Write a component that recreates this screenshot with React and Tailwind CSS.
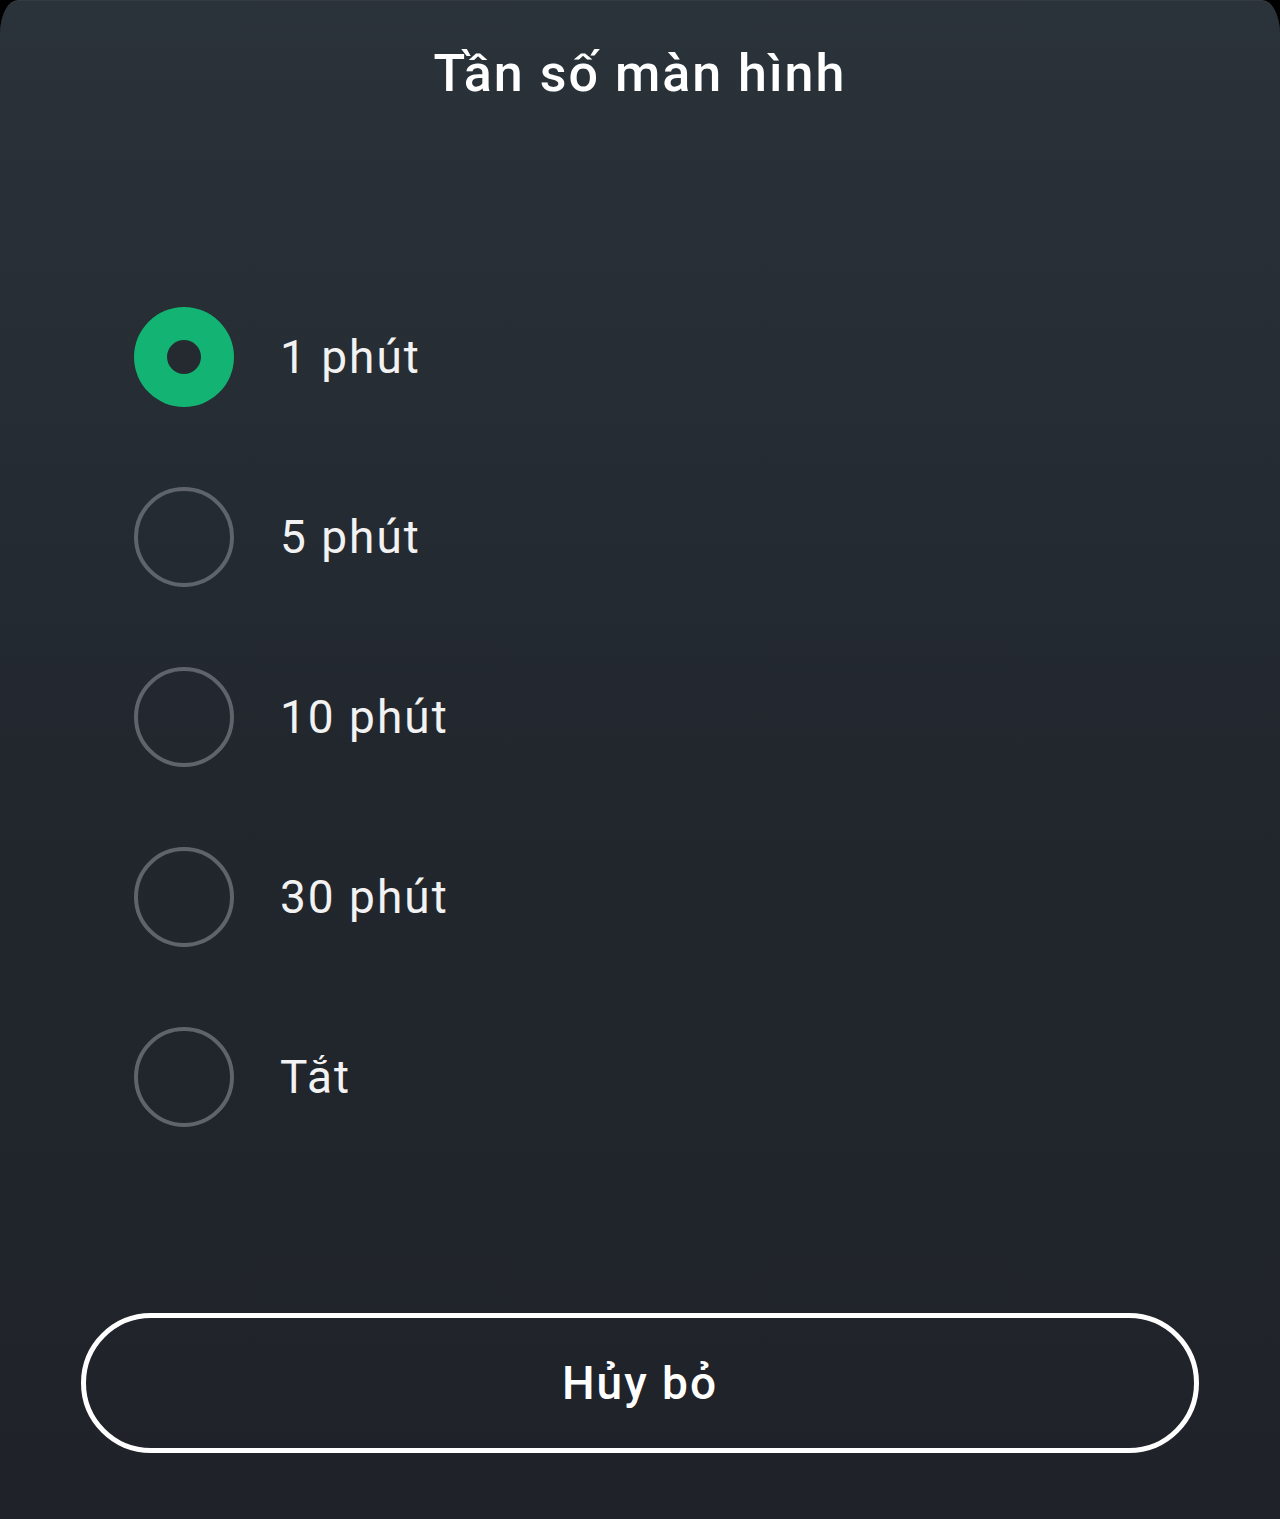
import React, { useState } from 'react';

const OPTIONS = ['1 phút', '5 phút', '10 phút', '30 phút', 'Tắt'];

export default function App() {
  const [selected, setSelected] = useState(0);

  return (
    <div className="w-[1280px] h-[1519px] bg-black" style={{ fontFamily: 'Roboto, "Noto Sans", sans-serif' }}>
      <div className="h-full flex flex-col rounded-tl-[18px_34px] rounded-tr-[18px_34px] border-t border-[#343c42] bg-gradient-to-b from-[#2a3339] via-[#22272e] to-[#1f2229]">
        {/* Title */}
        <h1 className="pt-[40px] text-center text-[52px] leading-[66px] font-medium text-white tracking-[2px]">
          Tần số màn hình
        </h1>

        {/* Options */}
        <div className="mt-[200px] flex flex-col gap-[80px] pl-[134px]">
          {OPTIONS.map((label, i) => (
            <button
              key={label}
              onClick={() => setSelected(i)}
              className="flex items-center h-[100px] text-left"
            >
              {selected === i ? (
                <span className="w-[100px] h-[100px] rounded-full bg-[#13b374] flex items-center justify-center">
                  <span className="w-[34px] h-[34px] rounded-full bg-[#252a31]" />
                </span>
              ) : (
                <span className="w-[100px] h-[100px] rounded-full border-[4px] border-[#5e646a]" />
              )}
              <span className="ml-[46px] text-[46px] text-[#f2f2f2] tracking-[2px]">{label}</span>
            </button>
          ))}
        </div>

        {/* Cancel */}
        <div className="mt-auto pb-[66px] px-[81px]">
          <button className="w-full h-[140px] rounded-full border-[5px] border-white text-[46px] font-medium text-white tracking-[2px]">
            Hủy bỏ
          </button>
        </div>
      </div>
    </div>
  );
}
